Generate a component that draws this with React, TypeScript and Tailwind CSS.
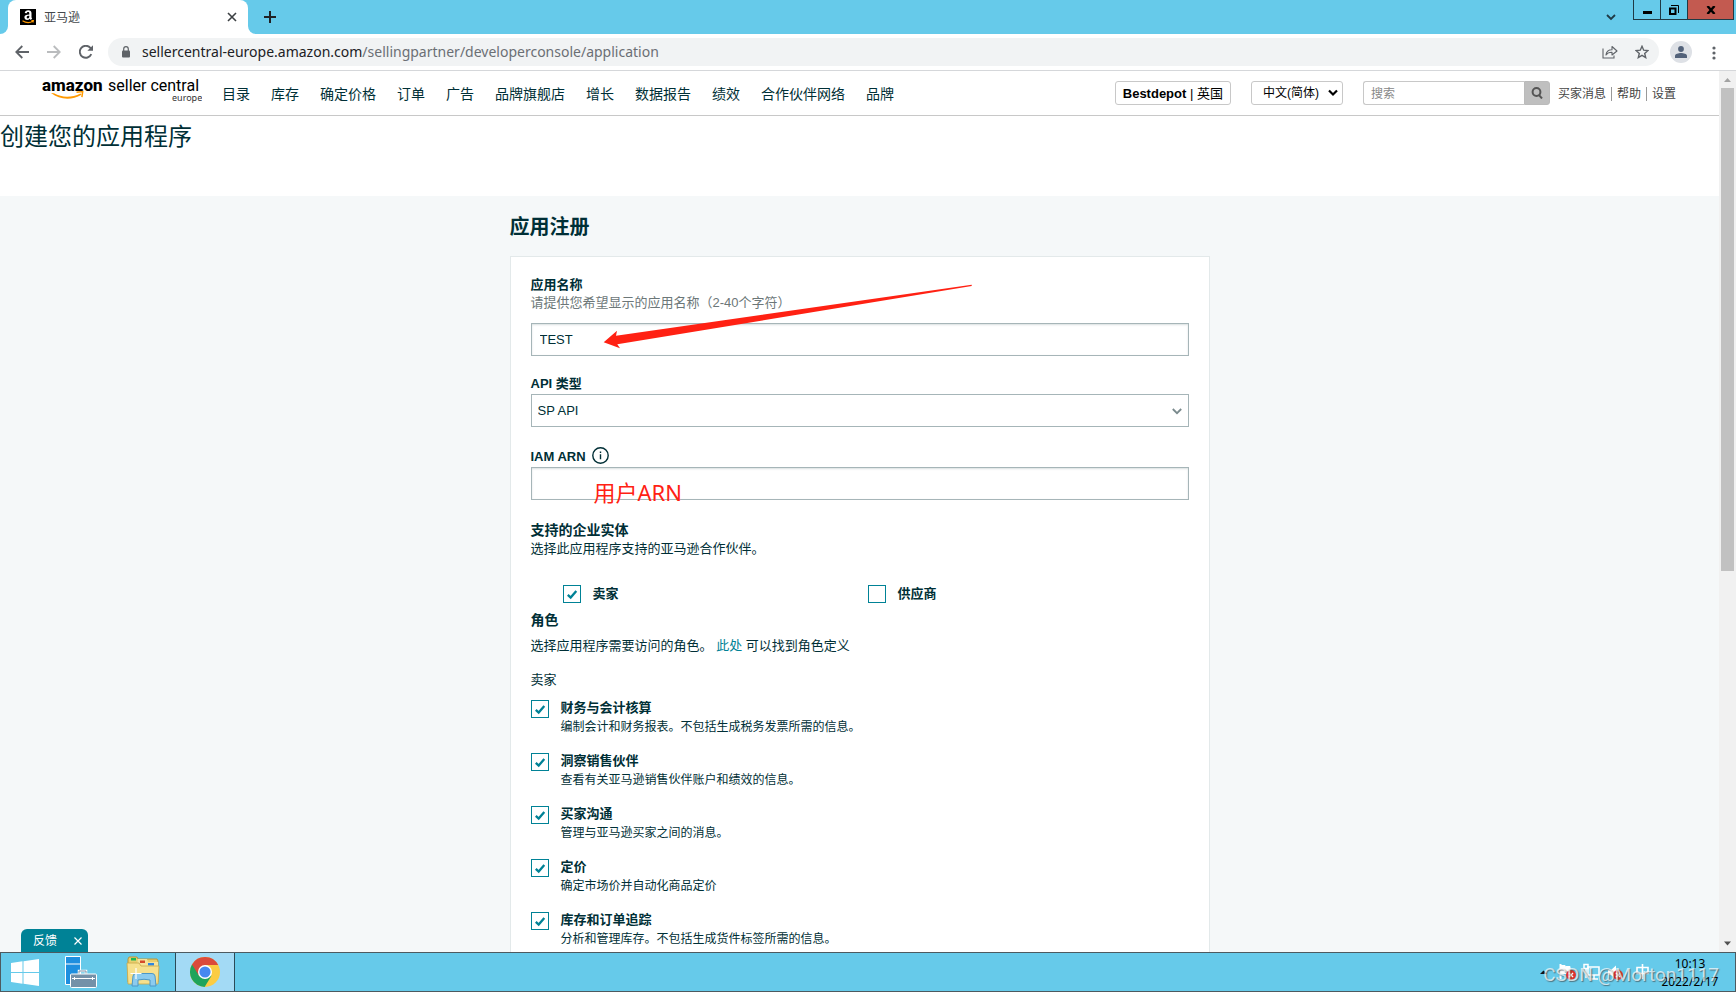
import React from "react";

const ui = "font-['Liberation_Sans','Noto_Sans_CJK_SC',sans-serif]";
const chromeFont = "font-['Noto_Sans','Noto_Sans_CJK_SC',sans-serif]";

const navItems = ["目录", "库存", "确定价格", "订单", "广告", "品牌旗舰店", "增长", "数据报告", "绩效", "合作伙伴网络", "品牌"];

const roles = [
  { id: "finance", title: "财务与会计核算", text: "编制会计和财务报表。不包括生成税务发票所需的信息。" },
  { id: "insights", title: "洞察销售伙伴", text: "查看有关亚马逊销售伙伴账户和绩效的信息。" },
  { id: "messages", title: "买家沟通", text: "管理与亚马逊买家之间的消息。" },
  { id: "pricing", title: "定价", text: "确定市场价并自动化商品定价" },
  { id: "inventory", title: "库存和订单追踪", text: "分析和管理库存。不包括生成货件标签所需的信息。" },
];

function Tick({ id, checked }: { id: string; checked?: boolean }) {
  return (
    <span className="grid size-[18px] shrink-0">
      <input
        id={id}
        type="checkbox"
        defaultChecked={checked}
        className="peer col-start-1 row-start-1 size-[18px] appearance-none border border-[#008296] bg-white"
      />
      <svg viewBox="0 0 18 18" className="pointer-events-none invisible col-start-1 row-start-1 size-[18px] peer-checked:visible" fill="none" stroke="#008296" strokeWidth="2.300">
        <path d="M4.800 9.800l2.900 2.800L13.300 6" />
      </svg>
    </span>
  );
}

function TabStrip() {
  return (
    <div className="flex h-[34px] shrink-0 items-start bg-[#66caea]">
      <div className="flex h-[34px] w-2 shrink-0 items-end bg-white">
        <div className="h-[34px] w-2 rounded-br-lg bg-[#66caea]" />
      </div>
      <div className="flex h-[34px] w-60 shrink-0 items-center rounded-t-lg bg-white pr-2 pl-3">
        <svg viewBox="0 0 16 16" className="size-4" role="img" aria-label="amazon">
          <rect width="16" height="16" fill="#000" />
          <path d="M9.3 5.4V4.3c0-.9-.4-1.3-1.2-1.3-.8 0-1.2.4-1.4 1.2l-2-.2C5 2.100 6.300 1.200 8.200 1.200c2.200 0 3.300 1 3.300 2.900v3.800c0 .8.3 1.200.7 1.700l-1.500 1.300c-.5-.4-.8-.8-1-1.200-.7.800-1.400 1.200-2.500 1.200-1.700 0-2.800-1-2.800-2.600 0-2.100 1.700-2.900 4.900-2.900zm0 1.400c-1.600 0-2.600.3-2.600 1.500 0 .7.4 1.100 1 1.100 1 0 1.600-.8 1.600-2z" fill="#fff" />
          <path d="M2.500 11.700c3.300 2.200 7.300 2.300 10.500.5M11.400 11.600l2-.1-.5 2" fill="none" stroke="#f90" strokeWidth="1.100" />
        </svg>
        <span className="ml-2 flex-1 pt-0.5 text-xs leading-4 text-[#45484c]">亚马逊</span>
        <button aria-label="关闭标签页" className="flex size-4 items-center justify-center">
          <svg viewBox="0 0 10 10" className="size-2.5" stroke="#3c4043" strokeWidth="1.600"><path d="M1 1l8 8M9 1L1 9" /></svg>
        </button>
      </div>
      <div className="flex h-[34px] w-2 shrink-0 bg-white">
        <div className="h-[34px] w-2 rounded-bl-lg bg-[#66caea]" />
      </div>
      <button aria-label="新标签页" className="mt-[11px] ml-2">
        <svg viewBox="0 0 12 12" className="size-3" stroke="#202124" strokeWidth="2"><path d="M6 0v12M0 6h12" /></svg>
      </button>
      <div className="flex-1" />
      <button aria-label="搜索标签页" className="mt-3 mr-[17px]">
        <svg viewBox="0 0 10 10" className="size-2.5" fill="none" stroke="#1f3a45" strokeWidth="1.800"><path d="M1 3l4 4 4-4" /></svg>
      </button>
      <div className="mr-0.5 flex h-5 border border-t-0 border-[#1f3a45]">
        <button aria-label="最小化" className="flex w-[26px] items-center justify-center">
          <svg viewBox="0 0 9 10" className="h-2.5 w-[9px]"><path d="M0 6h9v3H0z" /></svg>
        </button>
        <button aria-label="还原" className="flex w-[27px] items-center justify-center border-l border-[#1f3a45]">
          <svg viewBox="0 0 10 10" className="size-2.5" fill="none" stroke="#000"><path d="M1 3.500h5.500v5.500H1z" strokeWidth="2" /><path d="M2 .5h7.500V8" /></svg>
        </button>
        <button aria-label="关闭" className="flex w-[46px] items-center justify-center border-l border-[#1f3a45] bg-[#c35a50]">
          <svg viewBox="0 0 10 8" className="h-2 w-2.5" stroke="#000" strokeWidth="2.400"><path d="M1.500 0l7 8M8.500 0l-7 8" /></svg>
        </button>
      </div>
    </div>
  );
}

function AddressBar() {
  return (
    <div className="flex h-[37px] shrink-0 items-start border-b border-[#d5d7da] bg-white pt-1 pr-5 pl-[15px]">
      <div className="flex h-7 items-center gap-[18px]">
        <button aria-label="后退"><svg viewBox="0 0 14 14" className="size-3.5" fill="none" stroke="#5f6368" strokeWidth="1.800"><path d="M14 7H1.500M7.300 1L1.300 7l6 6" /></svg></button>
        <button aria-label="前进"><svg viewBox="0 0 14 14" className="size-3.5" fill="none" stroke="#babcbe" strokeWidth="1.800"><path d="M0 7h12.500M6.700 1l6 6-6 6" /></svg></button>
        <button aria-label="重新加载"><svg viewBox="0 0 14 14" className="size-3.5" fill="none" stroke="#5f6368" strokeWidth="1.900"><path d="M12.300 9.200A6 6 0 1 1 11.400 2.900L12.800 4.500" /><path d="M14 .2v5.600H8.400z" fill="#5f6368" stroke="none" /></svg></button>
      </div>
      <div className="ml-[15px] flex h-7 flex-1 items-center rounded-full bg-[#f1f3f4] pr-1.5 pl-3.5">
        <svg viewBox="0 0 8 12" className="h-3 w-2"><rect y="4.500" width="8" height="7" rx="1" fill="#5f6368" /><path d="M1.700 5V3a2.300 2.300 0 0 1 4.600 0v2" fill="none" stroke="#5f6368" strokeWidth="1.200" /></svg>
        <div className="ml-3 flex-1 text-sm leading-5 text-[#202124]">sellercentral-europe.amazon.com<span className="text-[#6b6f74]">/sellingpartner/developerconsole/application</span></div>
        <button aria-label="分享" className="mr-[17px]">
          <svg viewBox="0 0 16 14" className="h-3.5 w-4" fill="none" stroke="#5f6368" strokeWidth="1.100"><path d="M1 3.500V13h11v-2.500" /><path d="M4 10c.3-3.600 2.500-5.200 6-5.200V1.500L15 6l-5 4V7.300C7.400 7.200 5.500 8 4 10z" strokeLinejoin="round" /></svg>
        </button>
        <button aria-label="收藏" className="mr-1">
          <svg viewBox="0 0 14 14" className="size-3.5" fill="none" stroke="#5f6368" strokeWidth="1.400"><path d="M7 1.300l1.700 3.900 4.200.4-3.200 2.800 1 4.200L7 10.400l-3.700 2.200 1-4.200L1.100 5.600l4.200-.4z" /></svg>
        </button>
      </div>
      <button aria-label="用户" className="mt-[3px] ml-[11px] flex size-[22px] items-center justify-center rounded-full bg-[#dee1e6]">
        <svg viewBox="0 0 12 12" className="size-3" fill="#53627a"><circle cx="6" cy="3" r="2.900" /><path d="M0 12V9.800C0 8 3.500 7 6 7s6 1 6 2.800V12z" /></svg>
      </button>
      <button aria-label="菜单" className="mt-2 ml-5">
        <svg viewBox="0 0 4 14" className="h-3.5 w-1" fill="#5f6368"><circle cx="2" cy="2" r="1.600" /><circle cx="2" cy="7" r="1.600" /><circle cx="2" cy="12" r="1.600" /></svg>
      </button>
    </div>
  );
}

function Logo() {
  return (
    <a href="#home" className="block shrink-0 text-black">
      <svg viewBox="0 0 160 32" className="h-8 w-40" role="img" aria-label="amazon seller central europe">
        <text x="0" y="16" fontSize="17" fontWeight="800" fontFamily="Roboto,sans-serif">amazon</text>
        <text x="66" y="16" fontSize="16" fontFamily="Roboto,sans-serif">seller central</text>
        <text x="130" y="26" fontSize="9" fill="#333" fontFamily="'Noto Sans',sans-serif">europe</text>
        <path d="M9 18l3 .3c8 4.500 17.500 4.600 26.500.2l1 1.300C29.500 25.500 18 25 9 18z" fill="#f90" />
        <path d="M34.500 17.300l6.200-.8-.8 5.700" fill="none" stroke="#f90" strokeWidth="1.500" />
      </svg>
    </a>
  );
}

function SiteHeader() {
  return (
    <header className="flex h-[45px] shrink-0 items-start border-b border-[#c8c8c8] bg-white pr-[43px] pl-[42px]">
      <div className="mt-1"><Logo /></div>
      <nav className="mt-[13px] ml-5 flex gap-[21px] text-sm leading-5 whitespace-nowrap text-[#002f36]">
        {navItems.map((n) => (
          <a key={n} href="#nav">{n}</a>
        ))}
      </nav>
      <div className="flex-1" />
      <div className="mt-2.5 flex h-6 shrink-0 items-center whitespace-nowrap">
        <button className="flex h-6 items-center rounded-[3px] border border-[#c8c8c8] px-[7px] pt-0.5 text-[13px] text-black">
          <b>Bestdepot</b>&nbsp;|&nbsp;<span>英国</span>
        </button>
        <div className="ml-5 grid h-6 w-[92px] items-center">
          <select aria-label="语言" className="col-start-1 row-start-1 h-6 w-full appearance-none rounded-[3px] border border-[#c8c8c8] bg-white pl-[11px] text-xs text-black">
            <option>中文(简体)</option>
          </select>
          <svg viewBox="0 0 10 8" className="pointer-events-none col-start-1 row-start-1 mr-[5px] h-2 w-2.5 justify-self-end" fill="none" stroke="#000" strokeWidth="2.200"><path d="M1 1.500l4 4 4-4" /></svg>
        </div>
        <div className="ml-5 flex h-6">
          <input aria-label="搜索" placeholder="搜索" className="h-6 w-[161px] rounded-l-[3px] border border-r-0 border-[#c8c8c8] px-[7px] pt-0.5 text-xs text-black placeholder:text-[#888]" />
          <button aria-label="开始搜索" className="flex h-6 w-[26px] items-center justify-center rounded-r-[3px] border border-[#bbb] bg-[#bfbfbf]">
            <svg viewBox="0 0 12 12" className="size-3" fill="none" stroke="#555" strokeWidth="2"><circle cx="5.500" cy="5" r="3.900" /><path d="M7.800 7.800L11 11.500" /></svg>
          </button>
        </div>
        <div className="ml-2 flex items-center pt-0.5 text-xs leading-[14px] text-[#444]">
          <a href="#messages">买家消息</a>
          <a href="#help" className="ml-[5px] border-l border-[#999] pl-[5px]">帮助</a>
          <a href="#settings" className="ml-[5px] border-l border-[#999] pl-[5px]">设置</a>
        </div>
      </div>
    </header>
  );
}

function RegistrationCard() {
  const field = "h-[33px] w-full border border-[#a6b5b8] bg-white text-[13px] text-[#002f36]";
  return (
    <form className="relative mt-[15px] border border-[#e3e9ea] bg-white px-5 pt-[19px] pb-10 text-[13px] text-[#002f36]">
      <label htmlFor="app-name" className="block leading-[18px] font-bold">应用名称</label>
      <p className="leading-[18px] text-[#6c7778]">请提供您希望显示的应用名称（2-40个字符）</p>
      <input id="app-name" defaultValue="TEST" className={field + " mt-[11px] block px-2 shadow-[inset_0_1px_2px_rgba(0,47,54,0.15)]"} />

      <label htmlFor="api-type" className="mt-[18px] block leading-5 font-bold">API 类型</label>
      <div className="grid items-center">
        <select id="api-type" className={field + " col-start-1 row-start-1 appearance-none px-1.5"}>
          <option>SP API</option>
        </select>
        <svg viewBox="0 0 10 8" className="pointer-events-none col-start-1 row-start-1 mr-[7px] h-2 w-2.5 justify-self-end" fill="none" stroke="#7a8a8d" strokeWidth="1.800"><path d="M.8 2L5 6.200 9.200 2" /></svg>
      </div>

      <div className="mt-5 flex h-5 items-start gap-1.5">
        <label htmlFor="iam-arn" className="leading-5 font-bold">IAM ARN</label>
        <svg viewBox="0 0 17 17" className="size-[17px]" fill="none" stroke="#002f36" strokeWidth="1.400"><circle cx="8.500" cy="8.500" r="7.700" /><path d="M8.500 7.300v5M8.500 4.500v1.500" /></svg>
      </div>
      <input id="iam-arn" className={field + " block px-2 shadow-[inset_0_1px_2px_rgba(0,47,54,0.15)]"} />

      <h3 className="mt-5 text-sm leading-5 font-bold">支持的企业实体</h3>
      <p className="leading-[18px]">选择此应用程序支持的亚马逊合作伙伴。</p>
      <div className="mt-[27px] flex h-[18px] items-center pl-8 font-bold">
        <div className="flex w-[305px] items-center gap-3"><Tick id="seller" checked /><label htmlFor="seller">卖家</label></div>
        <div className="flex items-center gap-3"><Tick id="vendor" /><label htmlFor="vendor">供应商</label></div>
      </div>

      <h3 className="mt-[7px] text-sm leading-5 font-bold">角色</h3>
      <p className="mt-1.5 leading-5">选择应用程序需要访问的角色。 <a href="#roles" className="text-[#008296]">此处</a> 可以找到角色定义</p>
      <p className="mt-3.5 leading-5">卖家</p>
      <ul className="mt-[9px] flex flex-col gap-[15px]">
        {roles.map((r) => (
          <li key={r.id} className="flex items-start gap-3">
            <span className="mt-px"><Tick id={r.id} checked /></span>
            <label htmlFor={r.id} className="leading-[18px]">
              <b className="block">{r.title}</b>
              <span className="block text-xs leading-5">{r.text}</span>
            </label>
          </li>
        ))}
      </ul>

      <svg viewBox="0 0 376 68" className="pointer-events-none absolute top-[26px] left-[89px] h-[68px] w-[376px]" fill="#ff2113">
        <path d="M3.700 59.300L17 47.700 16 52.700 371.700 1.700V3L17.300 61.300 20 65.300z" />
      </svg>
      <span className="pointer-events-none absolute top-[221px] left-[83px] font-['Noto_Sans','Noto_Sans_CJK_SC',sans-serif] text-[22px] leading-7 text-[#ff2113]">用户ARN</span>
    </form>
  );
}

function ScrollBar() {
  return (
    <div className="flex w-[17px] shrink-0 flex-col items-center bg-[#f1f1f1]">
      <svg viewBox="0 0 17 17" className="size-[17px] shrink-0" fill="#a3a3a3"><path d="M5 11l3.500-4 3.500 4z" /></svg>
      <div className="flex w-[13px] flex-1 flex-col">
        <div className="h-[57%] bg-[#c1c1c1]" />
      </div>
      <svg viewBox="0 0 17 17" className="size-[17px] shrink-0" fill="#505050"><path d="M5 6.500l3.500 4 3.500-4z" /></svg>
    </div>
  );
}

function ServerIcon() {
  return (
    <svg viewBox="0 0 34 34" className="size-[34px]" fill="none">
      <path d="M1.500 1.500h15v28h-15z" fill="#1e8fdf" stroke="#fff" />
      <path d="M1.500 9h15" stroke="#fff" />
      <path d="M15 19v-3h7v3" stroke="#fff" strokeWidth="2.500" />
      <path d="M15 19v-3h7v3" stroke="#7b93a8" />
      <rect x="6.500" y="19" width="26" height="13.500" rx="1" fill="#7491a8" stroke="#fff" />
      <path d="M8 23.500h23M10.500 22v3M28.500 22v3" stroke="#fff" />
    </svg>
  );
}

function FolderIcon() {
  return (
    <svg viewBox="0 0 34 32" className="h-8 w-[34px]">
      <path d="M2 3l1-2h8l1 2h19l1 2v21H2z" fill="#e9cf6e" stroke="#b8963a" />
      <path d="M5 2h5v2.500H5z" fill="#1db954" />
      <path d="M12 3h9l1 3h10v4H11z" fill="#f5e29a" />
      <path d="M14 4.500h5V7h-5z" fill="#d6492a" />
      <path d="M22 7h6v2.500h-6z" fill="#2d86e0" />
      <path d="M1 7h12l2 3h18l-1 18H2z" fill="#f6e08d" stroke="#c9a84a" strokeWidth=".8" />
      <path d="M6 30l1-10q.4-2.500 3-2.500h16q2.600 0 3 2.500l1 10h-6v-6q-6-1.500-12 0v6z" fill="#8ccbee" stroke="#4c98c7" />
      <path d="M10 12v11M4.500 17.500h11" stroke="#fff" strokeWidth="1.200" />
    </svg>
  );
}

function ChromeIcon() {
  return (
    <svg viewBox="0 0 30 30" className="size-[30px]">
      <circle cx="15" cy="15" r="15" fill="#fbcc43" />
      <path d="M15 15L2 7.500A15 15 0 0 0 14.600 30L21.500 18.700z" fill="#1fa45b" />
      <path d="M15 8H28.200A15 15 0 0 0 2 7.500L8.900 18.500z" fill="#db4a3b" />
      <circle cx="15" cy="15" r="7" fill="#fff" />
      <circle cx="15" cy="15" r="5.600" fill="#4688f1" />
    </svg>
  );
}

function ErrorMark({ x, y }: { x: number; y: number }) {
  return (
    <g transform={`translate(${x} ${y})`}>
      <circle r="5" fill="#e0352b" />
      <path d="M-2-2l4 4M2-2l-4 4" stroke="#fff" strokeWidth="1.400" />
    </g>
  );
}

function Taskbar() {
  return (
    <footer className="relative flex h-10 shrink-0 border border-[#4d5a60] bg-[#66caea]">
      <button aria-label="开始" className="ml-2.5 flex items-center">
        <svg viewBox="0 0 28 27" className="h-[27px] w-7" fill="#fff"><path d="M0 4l11.500-1.700V13H0zM12.500 2.200L28 0v13H12.500zM0 14h11.500v10.700L0 23zM12.500 14H28v13l-15.500-2.200z" /></svg>
      </button>
      <button aria-label="服务器管理器" className="ml-[25px] flex items-center"><ServerIcon /></button>
      <button aria-label="文件资源管理器" className="ml-7 flex items-center"><FolderIcon /></button>
      <button aria-label="Chrome" className="ml-[15px] flex w-[60px] items-center justify-center border-x border-[#2b4a57] bg-[#a3daf5]"><ChromeIcon /></button>
      <div className="flex-1" />
      <svg viewBox="0 0 110 20" className="mt-2.5 h-5 w-[110px]" fill="none" aria-hidden="true">
        <path d="M0 11l3.500-3.500L7 11z" fill="#111" />
        <path d="M20.500 1v15" stroke="#fff" strokeWidth="2" />
        <path d="M21 2.500h4l1 1h4v7h-9z" fill="#fff" stroke="#fff" />
        <ErrorMark x={31} y={12} />
        <path d="M48 4h11v8H48zM50 16h8M54 12v4" stroke="#fff" strokeWidth="1.500" />
        <path d="M44 1.500h4v4h-4zM46 6v9" stroke="#fff" strokeWidth="1.500" />
        <path d="M68 7h3l5-4.500v14L71 12h-3z" fill="#fff" />
        <ErrorMark x={78} y={12} />
        <path d="M97 4.500h11v6H97zM102.500 1v15" stroke="#fff" strokeWidth="1.600" />
      </svg>
      <time className={chromeFont + " mr-[13px] ml-2 w-[64px] pt-0.5 text-center text-xs leading-[18px] text-black"}>
        <span className="block">10:13</span>
        <span className="block">2022/2/17</span>
      </time>
      <span className="pointer-events-none absolute top-2.5 right-4 font-['Roboto',sans-serif] text-[19px] leading-6 whitespace-nowrap text-white/70 [text-shadow:1px_1px_1px_rgba(60,60,60,0.6)]">CSDN @Morton1117</span>
    </footer>
  );
}

export default function App() {
  return (
    <div className={ui + " flex h-screen flex-col overflow-hidden bg-white"}>
      <div className={chromeFont}>
        <TabStrip />
        <AddressBar />
      </div>
      <div className="relative flex min-h-0 flex-1">
        <div className="flex min-w-0 flex-1 flex-col overflow-hidden">
          <SiteHeader />
          <div className="h-20 shrink-0 pt-[5px]">
            <h1 className="text-2xl leading-8 text-[#002f36]">创建您的应用程序</h1>
          </div>
          <main className="shrink-0 bg-[#f5f8f9] pt-[17px]">
            <div className="mx-auto max-w-[700px]">
              <h2 className="text-xl leading-7 font-bold text-[#002f36]">应用注册</h2>
              <RegistrationCard />
            </div>
          </main>
        </div>
        <ScrollBar />
        <div className="absolute bottom-0 left-[21px] flex h-[23px] w-[67px] items-center justify-between rounded-t-md bg-[#008296] pr-1.5 pl-3 text-xs text-white">
          <button>反馈</button>
          <button aria-label="关闭反馈" className="flex items-center">
            <svg viewBox="0 0 8 8" className="size-2" stroke="#fff" strokeWidth="1.200"><path d="M.5.5l7 7M7.500.5l-7 7" /></svg>
          </button>
        </div>
      </div>
      <Taskbar />
    </div>
  );
}
